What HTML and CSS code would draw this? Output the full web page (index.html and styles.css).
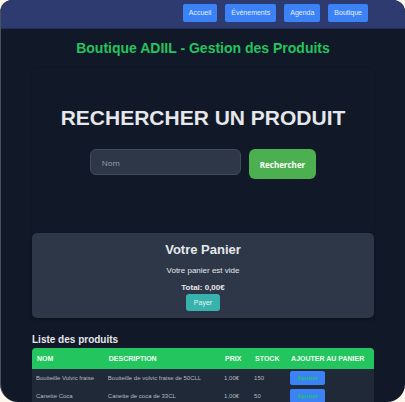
FILE: index.html
```html
<!DOCTYPE html>
<html lang="fr">
<head>
<meta charset="utf-8">
<title>Boutique ADIIL</title>
<link rel="stylesheet" href="styles.css">
</head>
<body>
<div class="page">
  <nav class="navbar">
    <a href="#accueil">Accueil</a>
    <a href="#evenements">Événements</a>
    <a href="#agenda">Agenda</a>
    <a href="#boutique">Boutique</a>
  </nav>
  <main class="content">
    <h1 class="title">Boutique ADIIL - Gestion des Produits</h1>
    <section class="search">
      <h2>RECHERCHER UN PRODUIT</h2>
      <form class="search-form">
        <input type="text" placeholder="Nom" aria-label="Nom">
        <button type="button">Rechercher</button>
      </form>
    </section>
    <section class="cart">
      <h2>Votre Panier</h2>
      <p>Votre panier est vide</p>
      <p class="total">Total: 0,00€</p>
      <button type="button">Payer</button>
    </section>
    <h2 class="list-title">Liste des produits</h2>
    <table class="products">
      <colgroup><col class="c-name"><col class="c-desc"><col class="c-price"><col class="c-stock"><col></colgroup>
      <thead>
        <tr><th>NOM</th><th>DESCRIPTION</th><th>PRIX</th><th>STOCK</th><th>AJOUTER AU PANIER</th></tr>
      </thead>
      <tbody>
        <tr><td>Bouiteille Volvic fraise</td><td>Bouiteille de volvic fraise de 50CLL</td><td>1,00€</td><td>150</td><td><button type="button">Ajouter</button></td></tr>
        <tr><td>Canette Coca</td><td>Canette de coca de 33CL</td><td>1,00€</td><td>50</td><td><button type="button">Ajouter</button></td></tr>
      </tbody>
    </table>
  </main>
</div>
</body>
</html>
```
FILE: styles.css
```css
* { box-sizing: border-box; }

body {
  margin: 0;
  height: 100vh;
  overflow: hidden;
  background: #fdf6ec;
  font-family: "Liberation Sans", Arial, sans-serif;
  color: #e5e7eb;
}

h1, h2, p { margin: 0; }
button { font-family: inherit; border: 0; }

.page {
  height: 100vh;
  overflow: hidden;
  background: #111827;
  border-left: 1px solid #4a4f5c;
  border-radius: 12px 12px 18px 18px;
}

.navbar {
  display: flex;
  justify-content: flex-end;
  gap: 8px;
  padding: 4px 37px 6px;
  background: #2d3b71;
  border-bottom: 1px solid #24305a;
}

.navbar a {
  padding: 0 6px;
  border-radius: 2px;
  background: #3b82f6;
  color: #e5edff;
  font-size: 7px;
  line-height: 18px;
  text-decoration: none;
}

.content { padding: 10px 31px 0; }

.title {
  color: #22c55e;
  font-size: 14px;
  line-height: 18px;
  text-align: center;
}

.search {
  margin-top: 11px;
  padding: 37px 0 54px;
  text-align: center;
  border-radius: 6px;
  box-shadow: 0 0 2px #0f1624;
}

.search h2 {
  font-size: 21px;
  line-height: 26px;
  white-space: nowrap;
}

.search-form {
  display: flex;
  justify-content: center;
  align-items: flex-start;
  gap: 8px;
  margin-top: 18px;
}

.search-form input {
  width: 151px;
  height: 26px;
  padding: 0 11px;
  border: 1px solid #414b5a;
  border-radius: 6px;
  background: #2d3748;
  color: #e5e7eb;
  font-family: "Open Sans", sans-serif;
  font-size: 8px;
}

.search-form input::placeholder { color: #9aa2af; opacity: 1; }

.search-form button {
  height: 30px;
  padding: 0 11px;
  border-radius: 6px;
  background: #4caf50;
  color: #fff;
  font-family: "Open Sans", sans-serif;
  font-size: 8px;
  font-weight: 700;
}

.cart {
  padding: 8px 0 7px;
  border-radius: 5px;
  background: #2d3748;
  text-align: center;
  box-shadow: 0 1px 3px #0b101c;
}

.cart h2 { font-size: 13px; line-height: 18px; }
.cart p { margin-top: 6px; font-size: 8px; line-height: 11px; }
.cart .total { font-weight: 700; }

.cart button {
  display: block;
  height: 17px;
  margin: 1px auto 0;
  padding: 0 8px;
  border-radius: 3px;
  background: #38b2ac;
  color: #e5f6f5;
  font-size: 7px;
}

.list-title {
  margin: 15px 0 1px;
  font-size: 10px;
  line-height: 14px;
}

.products {
  width: 100%;
  border-collapse: collapse;
  table-layout: fixed;
  overflow: hidden;
  border-radius: 4px;
  background: #1f2937;
}

.c-name { width: 21%; }
.c-desc { width: 34%; }
.c-price { width: 30px; }
.c-stock { width: 36px; }

.products th, .products td {
  padding: 0 4px;
  text-align: left;
  white-space: nowrap;
}

.products th {
  height: 21px;
  padding-left: 5px;
  padding-right: 0;
  background: #22c55e;
  color: #f0fff4;
  font-size: 7px;
}

.products td {
  height: 18px;
  color: #b4bac4;
  font-size: 6px;
}

.products button {
  display: block;
  height: 14px;
  padding: 0 7px;
  border-radius: 2px;
  background: #3b82f6;
  color: #22c55e;
  font-size: 6px;
  font-weight: 700;
}
```
